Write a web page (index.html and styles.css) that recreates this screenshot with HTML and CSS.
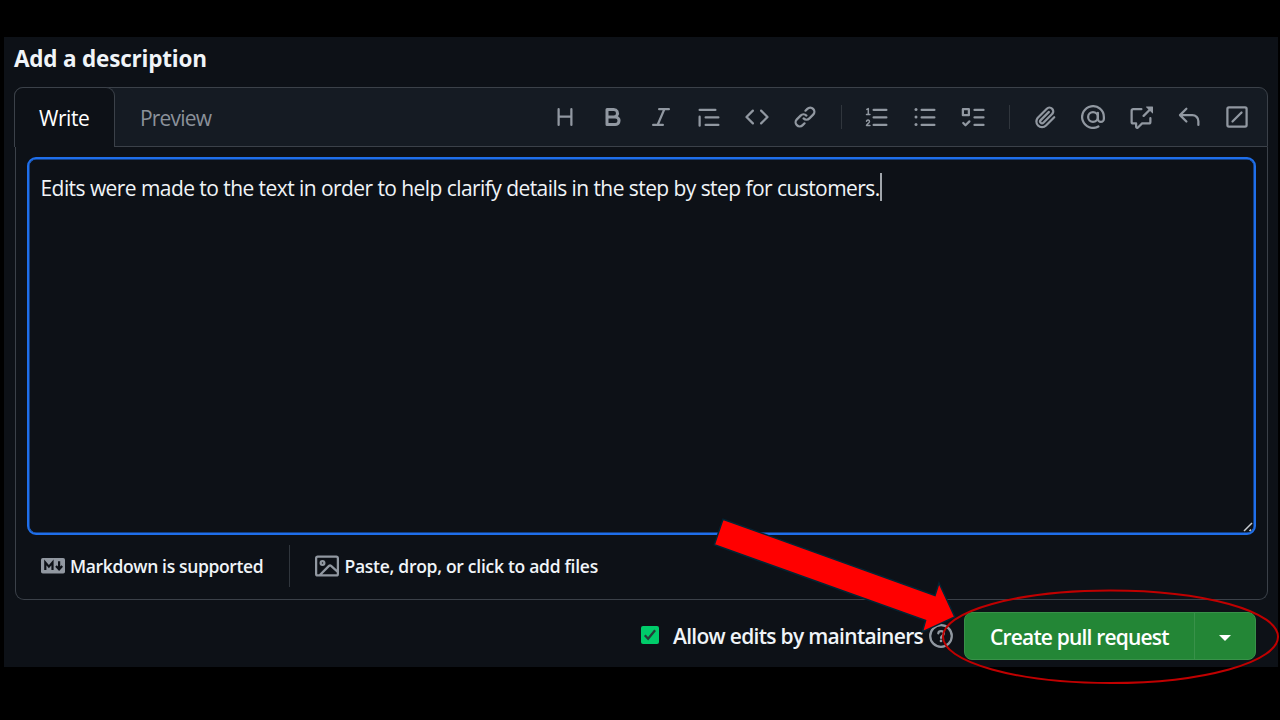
FILE: index.html
```html
<!DOCTYPE html>
<html lang="en">
<head>
<meta charset="utf-8">
<title>Add a description</title>
<link rel="stylesheet" href="styles.css">
</head>
<body>
<main class="panel">
  <h1 class="title"><span>Add a description</span></h1>
  <section class="editor">
    <header class="tabs">
      <div class="tab tab-active"><span class="t-write">Write</span></div>
      <div class="tab"><span class="t-preview">Preview</span></div>
      <div class="toolbar">
        <svg class="icon" viewBox="0 0 16 16"><path d="M3.75 2a.75.75 0 0 1 .75.75V7h7V2.75a.75.75 0 0 1 1.5 0v10.5a.75.75 0 0 1-1.5 0V8.5h-7v4.75a.75.75 0 0 1-1.5 0V2.75A.75.75 0 0 1 3.75 2Z"/></svg>
        <svg class="icon" viewBox="0 0 16 16"><path d="M4 2h4.5a3.501 3.501 0 0 1 2.852 5.53A3.499 3.499 0 0 1 9.5 14H4a1 1 0 0 1-1-1V3a1 1 0 0 1 1-1Zm1 7v3h4.5a1.5 1.5 0 0 0 0-3Zm3.5-2a1.5 1.5 0 0 0 0-3H5v3Z"/></svg>
        <svg class="icon" viewBox="0 0 16 16"><path d="M6 2.75A.75.75 0 0 1 6.75 2h6.5a.75.75 0 0 1 0 1.5h-2.505l-3.858 9H9.25a.75.75 0 0 1 0 1.5h-6.5a.75.75 0 0 1 0-1.5h2.505l3.858-9H6.75A.75.75 0 0 1 6 2.75Z"/></svg>
        <svg class="icon" viewBox="0 0 16 16"><path d="M1.75 2.5h10.5a.75.75 0 0 1 0 1.5H1.75a.75.75 0 0 1 0-1.5Zm4 5h8.5a.75.75 0 0 1 0 1.5h-8.5a.75.75 0 0 1 0-1.5Zm0 5h8.5a.75.75 0 0 1 0 1.5h-8.5a.75.75 0 0 1 0-1.5ZM2.5 7.75v6a.75.75 0 0 1-1.5 0v-6a.75.75 0 0 1 1.5 0Z"/></svg>
        <svg class="icon" viewBox="0 0 16 16"><path d="m11.28 3.22 4.25 4.25a.75.75 0 0 1 0 1.06l-4.25 4.25a.749.749 0 0 1-1.275-.326.749.749 0 0 1 .215-.734L13.94 8l-3.72-3.72a.749.749 0 0 1 .326-1.275.749.749 0 0 1 .734.215Zm-6.56 0a.751.751 0 0 1 1.042.018.751.751 0 0 1 .018 1.042L2.06 8l3.72 3.72a.749.749 0 0 1-.326 1.275.749.749 0 0 1-.734-.215L.47 8.53a.75.75 0 0 1 0-1.06Z"/></svg>
        <svg class="icon" viewBox="0 0 16 16"><path d="m7.775 3.275 1.25-1.25a3.5 3.5 0 1 1 4.95 4.95l-2.5 2.5a3.5 3.5 0 0 1-4.95 0 .751.751 0 0 1 .018-1.042.751.751 0 0 1 1.042-.018 1.998 1.998 0 0 0 2.83 0l2.5-2.5a2.002 2.002 0 0 0-2.83-2.83l-1.25 1.25a.751.751 0 0 1-1.042-.018.751.751 0 0 1-.018-1.042Zm-4.69 9.64a1.998 1.998 0 0 0 2.83 0l1.25-1.25a.751.751 0 0 1 1.042.018.751.751 0 0 1 .018 1.042l-1.25 1.25a3.5 3.5 0 1 1-4.95-4.95l2.5-2.5a3.5 3.5 0 0 1 4.95 0 .751.751 0 0 1-.018 1.042.751.751 0 0 1-1.042.018 1.998 1.998 0 0 0-2.83 0l-2.5 2.5a1.998 1.998 0 0 0 0 2.83Z"/></svg>
        <i class="sep"></i>
        <svg class="icon line" viewBox="0 0 16 16"><path d="M5.75 3.25h8.5M5.75 8.25h8.5M5.75 13.25h8.5"/><path class="thin" d="M1.2 2.9l1-.5v3.8M1 6.3h2.3M1 10.8c.3-1.2 2.1-1 2 .2-.1.9-1.2 1.4-2 2.6h2.3"/></svg>
        <svg class="icon line" viewBox="0 0 16 16"><path d="M5.75 3.25h8.5M5.75 8.25h8.5M5.75 13.25h8.5"/><g class="fill"><circle cx="2" cy="3" r="1"/><circle cx="2" cy="8" r="1"/><circle cx="2" cy="13" r="1"/></g></svg>
        <svg class="icon line" viewBox="0 0 16 16"><path d="M9 3.25h6M9 8.25h6M9 13.25h6M1.25 2.75h4v4h-4ZM1.5 12l1.5 1.5 2.6-2.6"/></svg>
        <i class="sep"></i>
        <svg class="icon" viewBox="0 0 16 16"><path d="M12.212 3.02a1.753 1.753 0 0 0-2.478.003l-5.83 5.83a3.007 3.007 0 0 0-.88 2.127c0 .795.315 1.551.88 2.116.567.567 1.333.89 2.126.89.79 0 1.548-.321 2.116-.89l5.48-5.48a.75.75 0 0 1 1.061 1.06l-5.48 5.48a4.492 4.492 0 0 1-3.177 1.33c-1.2 0-2.345-.487-3.187-1.33a4.483 4.483 0 0 1-1.32-3.177c0-1.195.475-2.341 1.32-3.186l5.83-5.83a3.25 3.25 0 0 1 5.553 2.297c0 .863-.343 1.691-.953 2.301L7.439 12.39c-.375.377-.884.59-1.416.593a1.998 1.998 0 0 1-1.412-.593 1.992 1.992 0 0 1 0-2.828l5.48-5.48a.751.751 0 0 1 1.042.018.751.751 0 0 1 .018 1.042l-5.48 5.48a.492.492 0 0 0 0 .707.499.499 0 0 0 .352.154.51.51 0 0 0 .356-.154l5.833-5.827a1.755 1.755 0 0 0 0-2.481Z"/></svg>
        <svg class="icon line" viewBox="0 0 16 16"><circle cx="8" cy="8" r="3.25"/><path d="M11.25 5.2V9.25a2 2 0 0 0 4 0V8A7.25 7.25 0 1 0 11.6 14.3"/></svg>
        <svg class="icon" viewBox="0 0 16 16"><path d="M2.75 3.5a.25.25 0 0 0-.25.25v7.5c0 .138.112.25.25.25h2a.75.75 0 0 1 .75.75v2.19l2.72-2.72a.749.749 0 0 1 .53-.22h4.5a.25.25 0 0 0 .25-.25v-2.5a.75.75 0 0 1 1.5 0v2.5A1.75 1.75 0 0 1 13.25 13H9.06l-2.573 2.573A1.458 1.458 0 0 1 4 14.543V13H2.75A1.75 1.75 0 0 1 1 11.25v-7.5C1 2.784 1.784 2 2.75 2h5.5a.75.75 0 0 1 0 1.5ZM16 1.25v4.146a.25.25 0 0 1-.427.177L14.03 4.03l-3.75 3.75a.749.749 0 0 1-1.275-.326.749.749 0 0 1 .215-.734l3.75-3.75-1.543-1.543A.25.25 0 0 1 11.604 1h4.146a.25.25 0 0 1 .25.25Z"/></svg>
        <svg class="icon" viewBox="0 0 16 16"><path d="M6.78 1.97a.75.75 0 0 1 0 1.06L3.81 6h6.44A4.75 4.75 0 0 1 15 10.75v2.5a.75.75 0 0 1-1.5 0v-2.5a3.25 3.25 0 0 0-3.25-3.25H3.81l2.97 2.97a.749.749 0 0 1-.326 1.275.749.749 0 0 1-.734-.215L1.47 7.28a.75.75 0 0 1 0-1.06l4.25-4.25a.75.75 0 0 1 1.06 0Z"/></svg>
        <svg class="icon line" viewBox="0 0 16 16"><rect x="1.6" y="1.6" width="12.8" height="12.8" rx="1"/><path d="M5 11l6-6"/></svg>
      </div>
    </header>
    <div class="body">
      <div class="textarea">
        <span class="t-body">Edits were made to the text in order to help clarify details in the step by step for customers.</span><i class="caret"></i>
        <svg class="grip" viewBox="0 0 10 10"><path d="M1 9l8-8M6.5 9l1.5-1.5"/></svg>
      </div>
      <footer class="hints">
        <svg class="md" viewBox="0 0 24 16"><rect width="24" height="15.5" rx="1.8"/><path d="M4.3 12V4.4l3.6 4.2 3.6-4.2V12M18.1 3.2v7.5M15 8l3.1 3.3L21.2 8"/></svg>
        <span class="t-md">Markdown is supported</span>
        <i class="divider"></i>
        <svg class="icon" viewBox="0 0 16 16"><path d="M16 13.25A1.75 1.75 0 0 1 14.25 15H1.75A1.75 1.75 0 0 1 0 13.25V2.75C0 1.784.784 1 1.75 1h12.5c.966 0 1.75.784 1.75 1.75ZM1.75 2.5a.25.25 0 0 0-.25.25v10.5c0 .138.112.25.25.25h.94l.03-.03 6.077-6.078a1.75 1.75 0 0 1 2.412-.06L14.5 10.31V2.75a.25.25 0 0 0-.25-.25Zm12.5 11a.25.25 0 0 0 .25-.25v-.917l-4.298-3.889a.25.25 0 0 0-.344.009L4.81 13.5ZM7 6a2 2 0 1 1-3.999.001A2 2 0 0 1 7 6ZM5.5 6a.5.5 0 1 0-1 0 .5.5 0 0 0 1 0Z"/></svg>
        <span class="t-paste">Paste, drop, or click to add files</span>
      </footer>
    </div>
  </section>
  <div class="actions">
    <svg class="check" viewBox="0 0 18 18"><rect width="18" height="18" rx="2"/><path d="M3.8 9.2l3.3 3.5 7-8.4"/></svg>
    <span class="t-allow">Allow edits by maintainers</span>
    <svg class="icon line help" viewBox="0 0 16 16"><circle cx="8" cy="8" r="7.2"/><path d="M6.2 6.3c.2-2.1 3.7-2 3.7.1 0 1.3-1.8 1.4-1.9 2.8"/><circle class="fill" cx="8" cy="11.3" r=".9"/></svg>
    <div class="button">
      <div class="create"><span class="t-create">Create pull request</span></div>
      <div class="drop"><svg viewBox="0 0 12 6"><path d="M0 0h12L6 6Z"/></svg></div>
    </div>
  </div>
</main>
<svg class="marks" viewBox="0 0 1280 720">
  <path class="arrow" d="M723 519.2L935 595.5L939 583L954.8 617L922.3 632L925.6 620.5L714.3 544.8Z"/>
  <ellipse class="ring" cx="1110.5" cy="636.7" rx="167.5" ry="46.3"/>
</svg>
</body>
</html>
```
FILE: styles.css
```css
* { box-sizing: border-box; }
body {
  margin: 0;
  width: 1280px;
  height: 720px;
  padding: 37px 2px 0 4px;
  overflow: hidden;
  background: #000;
  color: #f0f4f8;
  font: 21px/30px "Open Sans", "Noto Sans", sans-serif;
  white-space: nowrap;
}
svg { display: block; flex: none; }
.panel {
  height: 630px;
  padding: 0 10px;
  background: #0d1117;
  display: flex;
  flex-direction: column;
}
.title {
  margin: 0;
  flex: none;
  height: 50px;
  padding-top: 7px;
  font-size: 22.5px;
  font-weight: 700;
  letter-spacing: -.2px;
}
.editor { height: 513px; flex: none; }
.tabs {
  height: 60px;
  width: 1254px;
  display: flex;
  align-items: stretch;
  background: #151b23;
  border: 1px solid #3b4149;
  border-radius: 9px 9px 0 0;
}
.tab { padding: 15px 0 0 25px; color: #8b919a; }
.tab-active {
  width: 101px;
  margin: -1px 0 -1px -1px;
  padding: 15px 0 0 24px;
  background: #0d1117;
  border: 1px solid #3b4149;
  border-bottom: 0;
  border-radius: 9px 9px 0 0;
  color: #fff;
}
.toolbar {
  margin-left: auto;
  padding-right: 18px;
  display: flex;
  align-items: center;
  gap: 24px;
}
.icon { width: 24px; height: 24px; fill: #9198a1; }
.line { fill: none; stroke: #9198a1; stroke-width: 1.5; stroke-linecap: round; stroke-linejoin: round; }
.line .thin { stroke-width: 1; }
.line .fill { fill: #9198a1; stroke: none; }
.sep { width: 1px; height: 24px; margin: 0 -.5px; background: #30363d; }
.body {
  margin-left: 1px;
  width: 1253px;
  height: 453px;
  padding: 10px 11px 0;
  border: 1px solid #3b4149;
  border-top: 0;
  border-radius: 0 0 9px 9px;
}
.textarea {
  position: relative;
  height: 378px;
  padding: 14px 11.5px;
  border: 2px solid #1f6feb;
  box-shadow: inset 0 0 0 .5px #1f6feb;
  border-radius: 9px;
  display: flex;
  align-items: flex-start;
}
.caret { width: 2px; height: 28px; background: #a0a5ab; }
.grip { position: absolute; right: 1px; bottom: 1px; width: 10px; height: 10px; fill: none; stroke: #c9cdd2; stroke-width: 1.5; }
.hints {
  height: 62px;
  padding-left: 13.5px;
  display: flex;
  align-items: center;
  font-size: 17.5px;
  font-weight: 650;
}
.md { width: 24px; height: 16px; margin-right: 5.5px; fill: #9198a1; }
.md path { fill: none; stroke: #0d1117; stroke-width: 2.2; }
.t-md { width: 219px; letter-spacing: -.36px; }
.divider { width: 1px; height: 42px; background: #30363d; margin-right: 25px; }
.t-paste { margin-left: 5.5px; letter-spacing: -.28px; }
.actions {
  height: 67px;
  flex: none;
  padding: 5px 12px 0 627px;
  display: flex;
  align-items: center;
  font-size: 21px;
  font-weight: 650;
}
.check { width: 18px; height: 18px; fill: #00cc6a; margin: -2px 14px 0 0; }
.check path { fill: none; stroke: #263c38; stroke-width: 2.3; }
.t-allow { width: 256px; letter-spacing: -.7px; }
.button {
  width: 292px;
  height: 48px;
  margin-left: auto;
  display: flex;
  background: #238636;
  border: 1px solid #389149;
  border-radius: 8px;
  color: #fff;
}
.create { width: 229px; padding: 9px 0 0 25px; letter-spacing: -.82px; }
.drop { flex: 1; display: flex; align-items: center; justify-content: center; border-left: 1px solid #389149; }
.drop svg { width: 12px; height: 6px; margin-top: 4px; fill: #fff; }
.t-body { letter-spacing: -.565px; }
.t-write { letter-spacing: -.45px; }
.t-preview { letter-spacing: -.8px; }
.marks { position: absolute; left: 0; top: 0; width: 1280px; height: 720px; }
.arrow { fill: #f00; stroke: #042433; stroke-width: 1.5; }
.ring { fill: none; stroke: #c00000; stroke-width: 2; }
```
